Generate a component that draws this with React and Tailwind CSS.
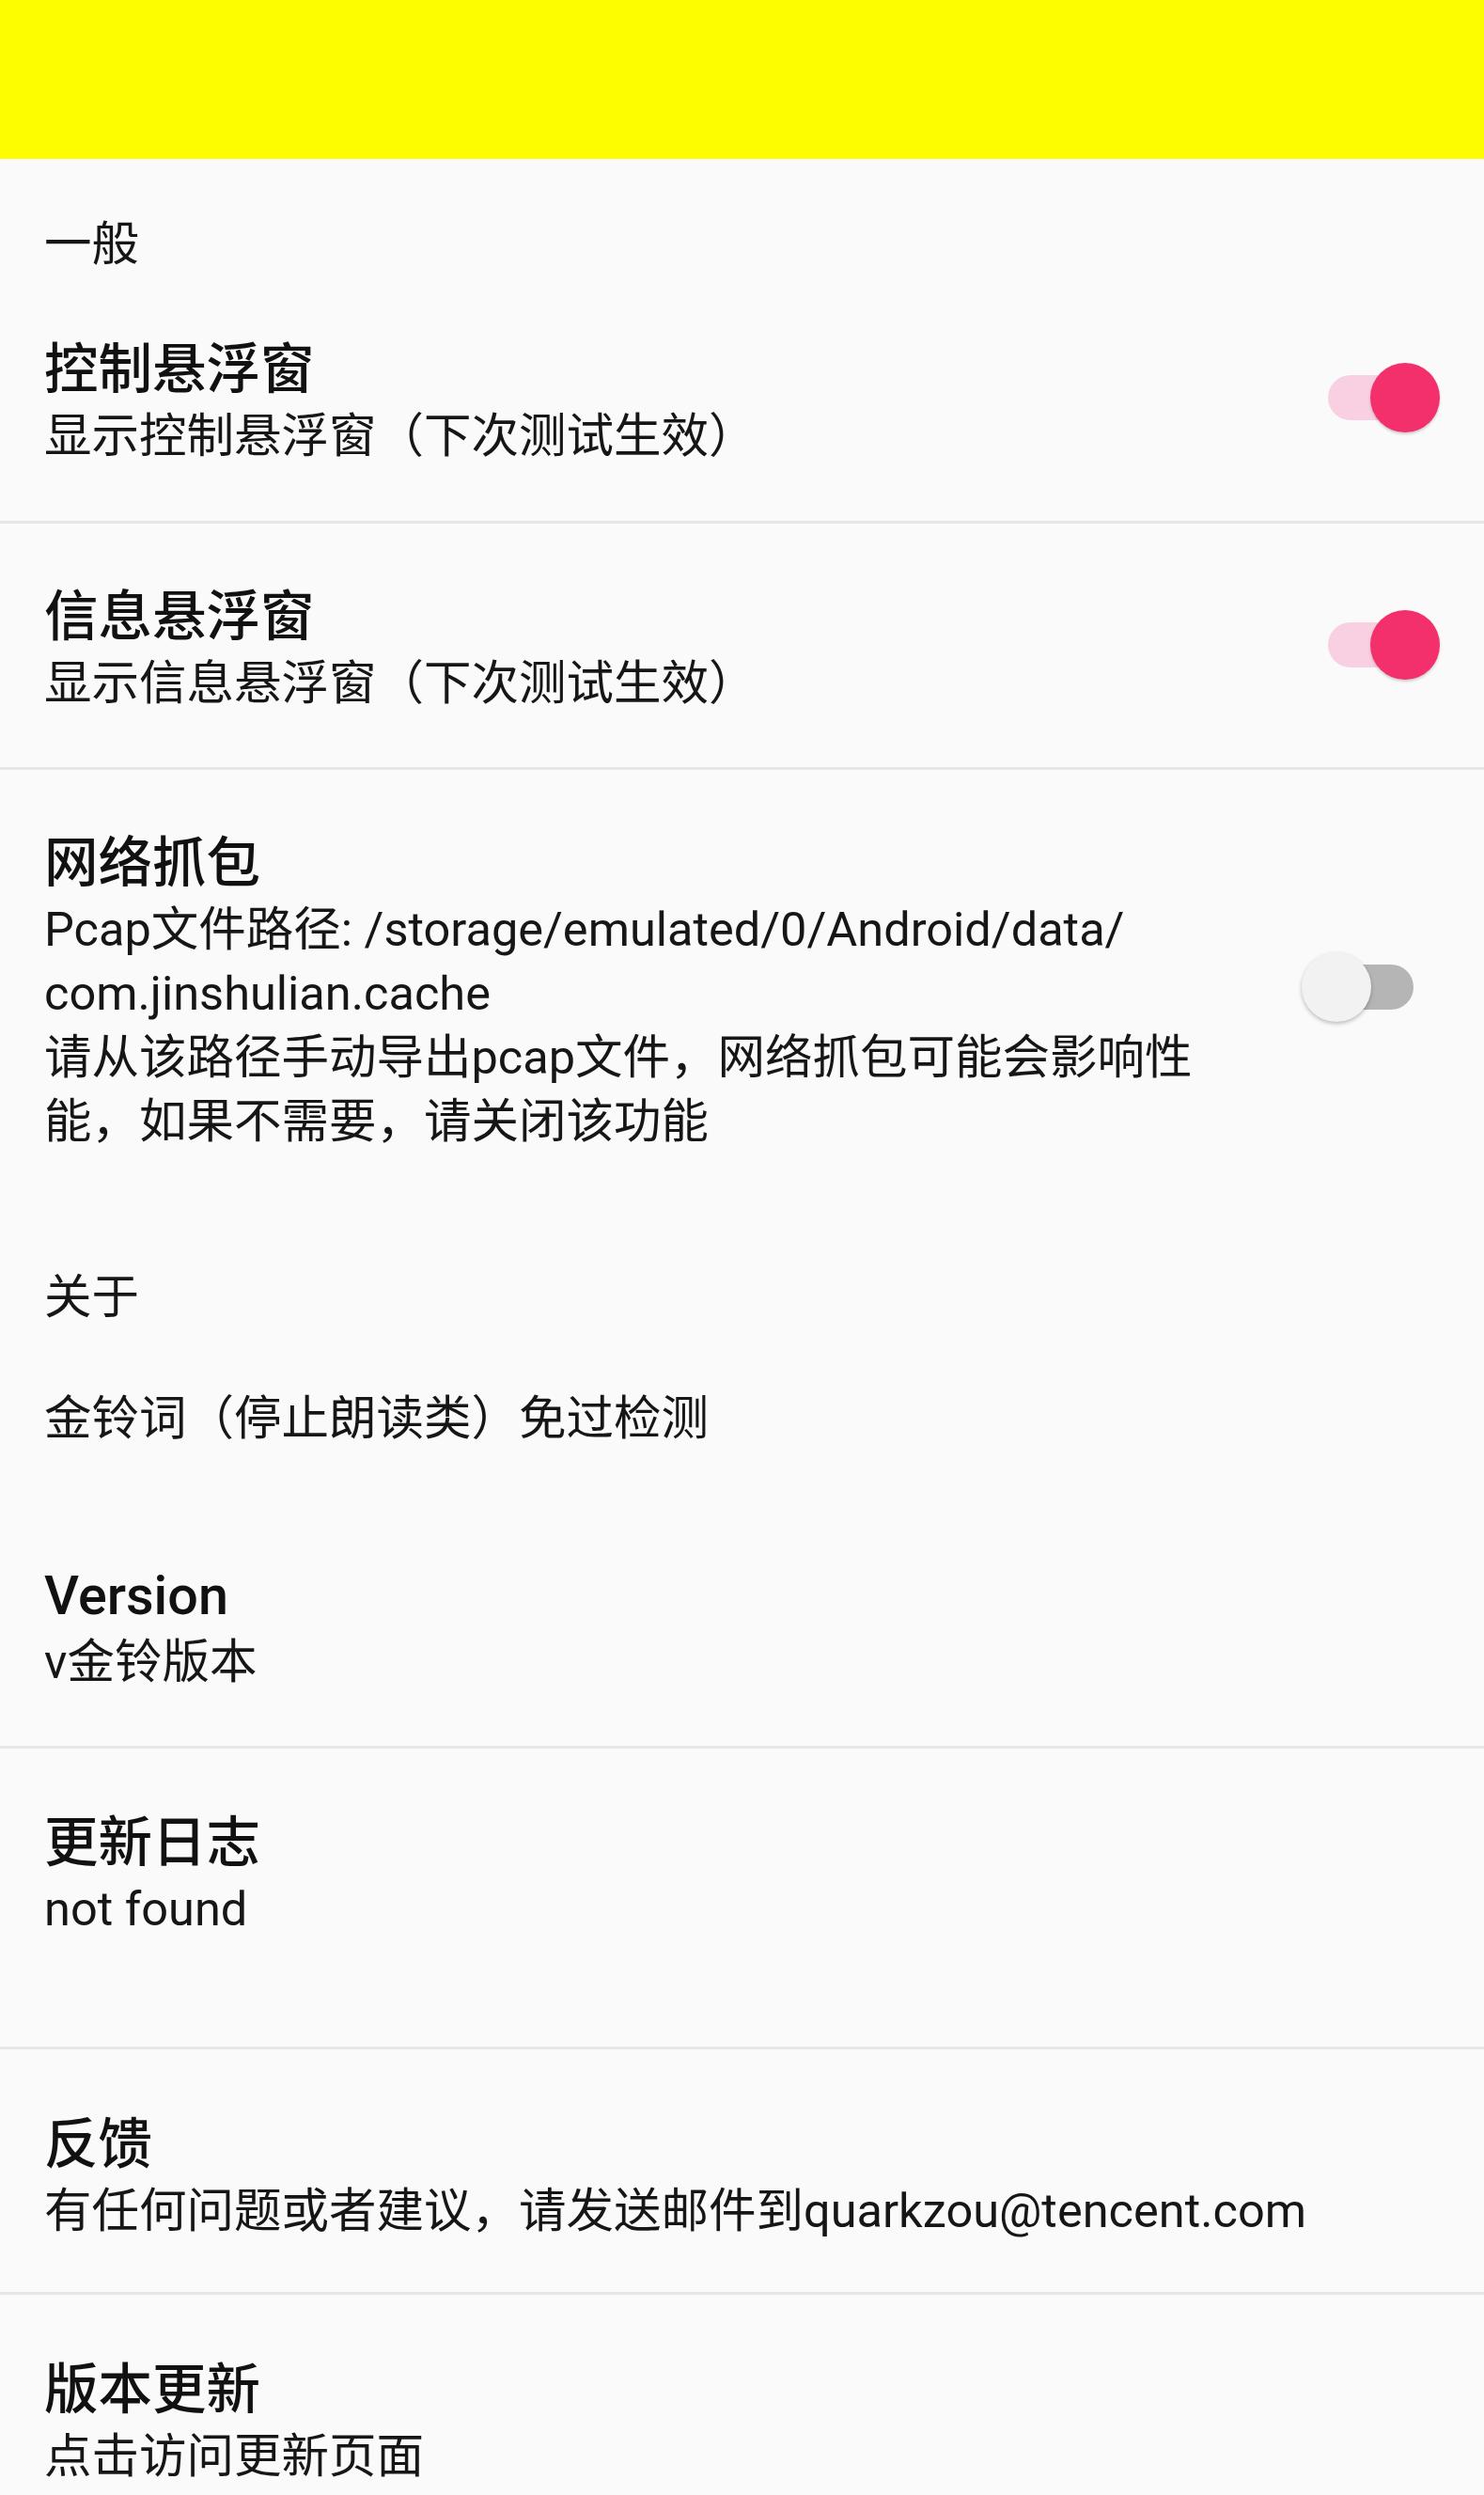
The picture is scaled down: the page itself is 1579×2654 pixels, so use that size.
import React, { useState } from "react";

const font = { fontFamily: 'Roboto, "Noto Sans CJK SC", sans-serif' };

// Android 风格的开关
const Switch = ({ on, onClick }) => (
  <button onClick={onClick} className="relative w-[119px] h-[74px] shrink-0 mb-[10px]">
    <span
      className={`absolute top-[13px] h-[48px] w-[109px] rounded-full ${
        on ? "left-0 bg-[#f9d0e1]" : "right-0 bg-[#b5b5b5]"
      }`}
    />
    <span
      className={`absolute top-0 h-[74px] w-[74px] rounded-full ${
        on
          ? "right-0 bg-[#f4306c] shadow-[0_2px_3px_rgba(0,0,0,0.18)]"
          : "left-0 bg-[#f2f2f2] shadow-[0_2px_4px_rgba(0,0,0,0.25)]"
      }`}
    />
  </button>
);

const Divider = () => <div className="h-[3px] bg-[#e6e6e6]" />;

const SectionHeader = ({ children, className = "" }) => (
  <div className={`px-[47px] text-[50.5px] leading-[68px] text-[#161616] ${className}`}>{children}</div>
);

const Row = ({ title, lines = [], right, className = "" }) => (
  <div className={`flex items-center pl-[47px] ${className}`}>
    <div className="flex-1 min-w-0">
      {title && <div className="text-[57.5px] leading-[72px] font-medium text-[#111]">{title}</div>}
      {lines.map((l, i) => (
        <div key={i} className="text-[50.5px] leading-[68px] text-[#161616] whitespace-nowrap">
          {l}
        </div>
      ))}
    </div>
    {right}
  </div>
);

export default function App() {
  const [ctrl, setCtrl] = useState(true);
  const [info, setInfo] = useState(true);
  const [pcap, setPcap] = useState(false);

  return (
    <div className="w-[1579px] min-h-[2654px] bg-[#fafafa]" style={font}>
      {/* 顶部黄色栏 */}
      <div className="h-[169px] bg-[#fdfd00]" />

      <SectionHeader className="pt-[57px]">一般</SectionHeader>

      <Row
        className="pt-[64px] pb-[56px] pr-[47px]"
        title="控制悬浮窗"
        lines={["显示控制悬浮窗（下次测试生效）"]}
        right={<Switch on={ctrl} onClick={() => setCtrl(!ctrl)} />}
      />
      <Divider />
      <Row
        className="pt-[64px] pb-[55px] pr-[47px]"
        title="信息悬浮窗"
        lines={["显示信息悬浮窗（下次测试生效）"]}
        right={<Switch on={info} onClick={() => setInfo(!info)} />}
      />
      <Divider />
      <Row
        className="pt-[64px] pb-[58px] pr-[75px]"
        title="网络抓包"
        lines={[
          "Pcap文件路径: /storage/emulated/0/Android/data/",
          "com.jinshulian.cache",
          "请从该路径手动导出pcap文件，网络抓包可能会影响性",
          "能，如果不需要，请关闭该功能",
        ]}
        right={<Switch on={pcap} onClick={() => setPcap(!pcap)} />}
      />

      <SectionHeader className="pt-[61px]">关于</SectionHeader>

      <Row className="pt-[61px] pb-[59px] pr-[47px]" lines={["金铃词（停止朗读类）免过检测"]} />
      <Row className="pt-[60px] pb-[55px] pr-[47px]" title="Version" lines={["v金铃版本"]} />
      <Divider />
      <Row className="pt-[65px] pb-[112px] pr-[47px]" title="更新日志" lines={["not found"]} />
      <Divider />
      <Row
        className="pt-[66px] pb-[52px] pr-[47px]"
        title="反馈"
        lines={["有任何问题或者建议，请发送邮件到quarkzou@tencent.com"]}
      />
      <Divider />
      <Row className="pt-[66px] pb-[6px] pr-[47px]" title="版本更新" lines={["点击访问更新页面"]} />
    </div>
  );
}
